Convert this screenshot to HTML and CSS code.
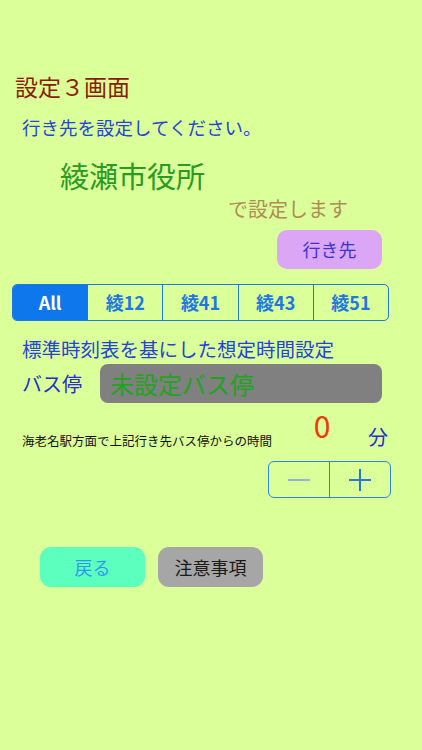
FILE: index.html
```html
<!DOCTYPE html>
<html lang="ja">
<head>
<meta charset="utf-8">
<title>設定３画面</title>
<link rel="stylesheet" href="styles.css">
</head>
<body>
<div class="screen">
  <div class="title">設定３画面</div>
  <div class="prompt">行き先を設定してください。</div>
  <div class="dest">綾瀬市役所</div>
  <div class="suffix">で設定します</div>
  <div class="btn-row"><button class="btn-dest">行き先</button></div>
  <div class="segments">
    <div class="seg selected">All</div>
    <div class="seg">綾12</div>
    <div class="seg">綾41</div>
    <div class="seg">綾43</div>
    <div class="seg">綾51</div>
  </div>
  <div class="section">標準時刻表を基にした想定時間設定</div>
  <div class="bus-row">
    <div class="bus-label">バス停</div>
    <div class="bus-box">未設定バス停</div>
  </div>
  <div class="info-row">
    <div class="info-text">海老名駅方面で上記行き先バス停からの時間</div>
    <div class="minutes">0</div>
    <div class="unit">分</div>
  </div>
  <div class="stepper-row">
    <div class="stepper">
      <div class="step minus"><svg width="22" height="22" viewBox="0 0 22 22"><line x1="0" y1="11" x2="22" y2="11" stroke="#8ab8de" stroke-width="2"/></svg></div>
      <div class="step plus"><svg width="22" height="22" viewBox="0 0 22 22"><line x1="0" y1="11" x2="22" y2="11" stroke="#1f78e0" stroke-width="2"/><line x1="11" y1="0" x2="11" y2="22" stroke="#1f78e0" stroke-width="2"/></svg></div>
    </div>
  </div>
  <div class="bottom-row">
    <button class="btn-back">戻る</button>
    <button class="btn-notes">注意事項</button>
  </div>
</div>
</body>
</html>
```
FILE: styles.css
```css
html, body {
  margin: 0;
  padding: 0;
  background: #dbff99;
}
body {
  font-family: "Noto Sans CJK JP", "Noto Sans", sans-serif;
}
.screen {
  width: 422px;
  height: 750px;
  padding-top: 71px;
  box-sizing: border-box;
  overflow: hidden;
}
.title {
  height: 30px;
  line-height: 30px;
  padding-left: 15px;
  font-size: 23px;
  color: #8a1c06;
}
.prompt {
  margin-top: 13px;
  height: 26px;
  line-height: 26px;
  padding-left: 22px;
  font-size: 18.5px;
  color: #2444d4;
}
.dest {
  margin-top: 16px;
  height: 38px;
  line-height: 38px;
  padding-left: 60px;
  font-size: 29px;
  color: #2a9a22;
}
.suffix {
  margin-top: 1px;
  height: 28px;
  line-height: 28px;
  padding-left: 228px;
  font-size: 20px;
  color: #b08c55;
}
.btn-row {
  margin-top: 7px;
  height: 39px;
  padding-left: 277px;
}
button {
  font-family: inherit;
  border: none;
  padding: 0;
  margin: 0;
  display: block;
}
.btn-dest {
  width: 105px;
  height: 39px;
  border-radius: 10px;
  background: #dca6f7;
  color: #3a34cc;
  font-size: 18px;
  line-height: 39px;
}
.segments {
  margin: 15px 0 0 12px;
  width: 377px;
  height: 37px;
  box-sizing: border-box;
  border: 1px solid #1f78e0;
  border-radius: 5px;
  display: flex;
  overflow: hidden;
}
.seg {
  flex: 1;
  text-align: center;
  line-height: 35px;
  font-size: 18px;
  font-weight: bold;
  color: #1f78e0;
  border-left: 1px solid #1f78e0;
}
.seg:first-child {
  border-left: none;
}
.seg.selected {
  background: #0f77ec;
  color: #ffffff;
}
.section {
  margin-top: 14px;
  height: 28px;
  line-height: 28px;
  padding-left: 22px;
  font-size: 19.5px;
  color: #2444d4;
}
.bus-row {
  margin-top: 1px;
  height: 39px;
  display: flex;
  padding-left: 22px;
}
.bus-label {
  width: 78px;
  line-height: 39px;
  font-size: 20px;
  color: #2232c4;
}
.bus-box {
  width: 282px;
  height: 39px;
  line-height: 39px;
  border-radius: 8px;
  background: #808080;
  color: #21a31d;
  font-size: 24px;
  padding-left: 10px;
  box-sizing: border-box;
}
.info-row {
  margin-top: 5px;
  height: 42px;
  display: flex;
  align-items: flex-start;
  padding-left: 22px;
}
.info-text {
  width: 280px;
  margin-top: 25px;
  line-height: 16px;
  font-size: 12.5px;
  color: #111111;
}
.minutes {
  width: 40px;
  text-align: center;
  line-height: 34px;
  font-size: 30px;
  color: #f03a05;
}
.unit {
  margin-left: 26px;
  margin-top: 17px;
  line-height: 24px;
  font-size: 20px;
  color: #2232c4;
}
.stepper-row {
  margin-top: 11px;
  height: 37px;
  padding-left: 268px;
}
.stepper {
  width: 123px;
  height: 37px;
  box-sizing: border-box;
  border: 1px solid #2f84de;
  border-radius: 6px;
  display: flex;
}
.step {
  flex: 1;
  display: flex;
  align-items: center;
  justify-content: center;
}
.step.plus {
  border-left: 1px solid #2f84de;
}
.bottom-row {
  margin-top: 49px;
  display: flex;
  padding-left: 40px;
  gap: 13px;
}
.btn-back, .btn-notes {
  width: 105px;
  height: 40px;
  border-radius: 11px;
  font-size: 18px;
  line-height: 40px;
}
.btn-back {
  background: #5cffbe;
  color: #2e98ee;
}
.btn-notes {
  background: #a6a6a6;
  color: #1a1a1a;
}
```
